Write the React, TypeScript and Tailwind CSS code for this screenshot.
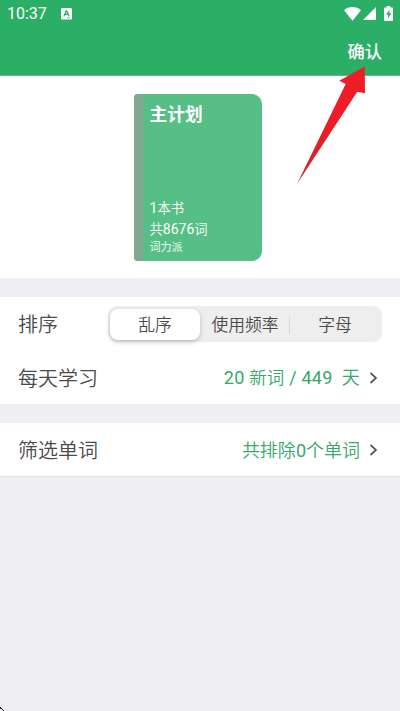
import { useState } from 'react';

const sortOptions = [
  { id: 'random', label: '乱序' },
  { id: 'frequency', label: '使用频率' },
  { id: 'letter', label: '字母' },
];

function StatusBar() {
  return (
    <div className="flex h-[27px] items-center pl-[7px] pr-[7px] text-white">
      <span className="text-[16px] leading-none">10:37</span>
      <svg className="ml-[14px]" width="11" height="12" viewBox="0 0 11 12">
        <rect width="11" height="11.5" rx="1.2" fill="#fff" />
        <path d="M3 8.2 5.2 3h.6L8 8.2M3.8 6.4h3.4M6.3 9.6h1M8.2 9.6h1" fill="none" stroke="#2bae66" strokeWidth="1.3" />
      </svg>
      <div className="ml-auto flex items-center">
        <svg width="17" height="14" viewBox="0 0 17 14">
          <path d="M0 3.2C2.3 1.2 5.2 0 8.5 0S14.7 1.2 17 3.2L8.5 13.7z" fill="#fff" />
        </svg>
        <svg className="ml-[2.5px]" width="13" height="13" viewBox="0 0 13 13">
          <path d="M13 0v13H0z" fill="#fff" />
        </svg>
        <svg className="ml-[8px]" width="9" height="15" viewBox="0 0 9 15">
          <path d="M2.7 0h3.6v1.5H8c.6 0 1 .4 1 1V14c0 .6-.4 1-1 1H1c-.6 0-1-.4-1-1V2.5c0-.6.4-1 1-1h1.7z" fill="#fff" />
          <path d="M5.4 3.7 2 8.8h2.1v3.6L7.2 7.3H5.3z" fill="#2bae66" />
        </svg>
      </div>
    </div>
  );
}

function PlanCard() {
  return (
    <div className="flex h-[167px] w-[128px] overflow-hidden rounded-l-[4px] rounded-r-[10px] bg-[#56bf86] text-white">
      <div className="w-[9px] bg-[#82a893]" />
      <div className="flex flex-1 flex-col pl-[6.5px] pt-[9px] pb-[6px]">
        <h2 className="text-[17.7px] font-bold leading-[25px]">主计划</h2>
        <div className="mt-auto text-[13.3px] font-[350] leading-[20px]">
          <p><span className="text-[14px] font-normal">1</span>本书</p>
          <p>共<span className="text-[14px] font-normal">8676</span>词</p>
        </div>
        <p className="text-[11px] font-[350] leading-[15px]">词力派</p>
      </div>
    </div>
  );
}

function Chevron() {
  return (
    <svg className="ml-[9px] mr-[4px]" width="9" height="12" viewBox="0 0 9 12">
      <path d="M1.5 1 7 6l-5.500 5" fill="none" stroke="#555" strokeWidth="1.7" />
    </svg>
  );
}

export default function App() {
  const [sort, setSort] = useState('random');

  return (
    <div className="relative min-h-[711px] w-[400px] overflow-hidden bg-[#eeeef3] font-[Roboto,'Noto_Sans_CJK_SC',sans-serif] text-[#4a4a4a]">
      <header className="h-[76px] border-b border-[#55ba83] bg-[#2bae66]">
        <StatusBar />
        <div className="flex h-[48px] items-center justify-end pt-[3px] pr-[18px]">
          <button className="text-[17.3px] font-medium leading-none text-white">确认</button>
        </div>
      </header>

      <section className="flex h-[202px] justify-center bg-white pt-[18px] pr-[4px]">
        <PlanCard />
      </section>

      <section className="mt-[19px] h-[107px] bg-white">
        <div className="flex h-[54px] items-center justify-between pl-[18px] pr-[18px]">
          <span className="pt-[2px] text-[20px] font-[350]">排序</span>
          <div className="flex h-[36px] w-[274px] items-center rounded-[9px] bg-[#eeeeee] p-[2px]">
            {sortOptions.map((option, i) => (
              <button
                key={option.id}
                onClick={() => setSort(option.id)}
                className={`relative h-[31px] flex-1 whitespace-nowrap pt-[2px] text-[16.8px] font-[350] leading-none ${
                  sort === option.id ? 'rounded-[8px] bg-white shadow-[0_2px_5px_rgba(0,0,0,0.22)]' : ''
                }`}
              >
                {option.label}
                {i === 1 && <span className="absolute right-0 top-[7px] h-[18px] w-px bg-[#d8d8d8]" />}
              </button>
            ))}
          </div>
        </div>
        <div className="flex h-[53px] items-center pl-[18px] pr-[18px]">
          <span className="pt-[2px] text-[20px] font-[350]">每天学习</span>
          <span className="ml-auto whitespace-pre pt-[1px] text-[18px] tracking-[0.2px] text-[#35a86b]">
            20 <span className="text-[17.5px] font-[350]">新词</span> / 449  <span className="font-[350]">天</span>
          </span>
          <Chevron />
        </div>
      </section>

      <section className="mt-[19px] flex h-[54px] items-center border-b border-[#e2e2e6] bg-white pl-[18px] pr-[18px]">
        <span className="pt-[2px] text-[20px] font-[350]">筛选单词</span>
        <span className="ml-auto pt-[2px] text-[18px] font-[350] text-[#35a86b]">
          共排除<span className="font-normal">0</span>个单词
        </span>
        <Chevron />
      </section>

      {/* Pointer to the confirm button */}
      <svg className="pointer-events-none absolute left-[290px] top-[60px]" width="90" height="130" viewBox="290 60 90 130">
        <defs>
          <linearGradient id="arrow" x1="0" y1="1" x2="0.5" y2="0">
            <stop offset="0" stopColor="#c52a30" />
            <stop offset="0.6" stopColor="#ee1c25" />
          </linearGradient>
        </defs>
        <path d="M364.7 66.5 365 93.3 357.3 91.7 297 184 345.7 84 339.3 80.7z" fill="url(#arrow)" />
      </svg>
      <svg className="absolute bottom-0 left-0" width="4" height="4" viewBox="0 0 4 4">
        <path d="M0 0h1v1h1v1h1v1h1v1H3V3H2V2H0z" fill="#222" />
      </svg>
    </div>
  );
}
